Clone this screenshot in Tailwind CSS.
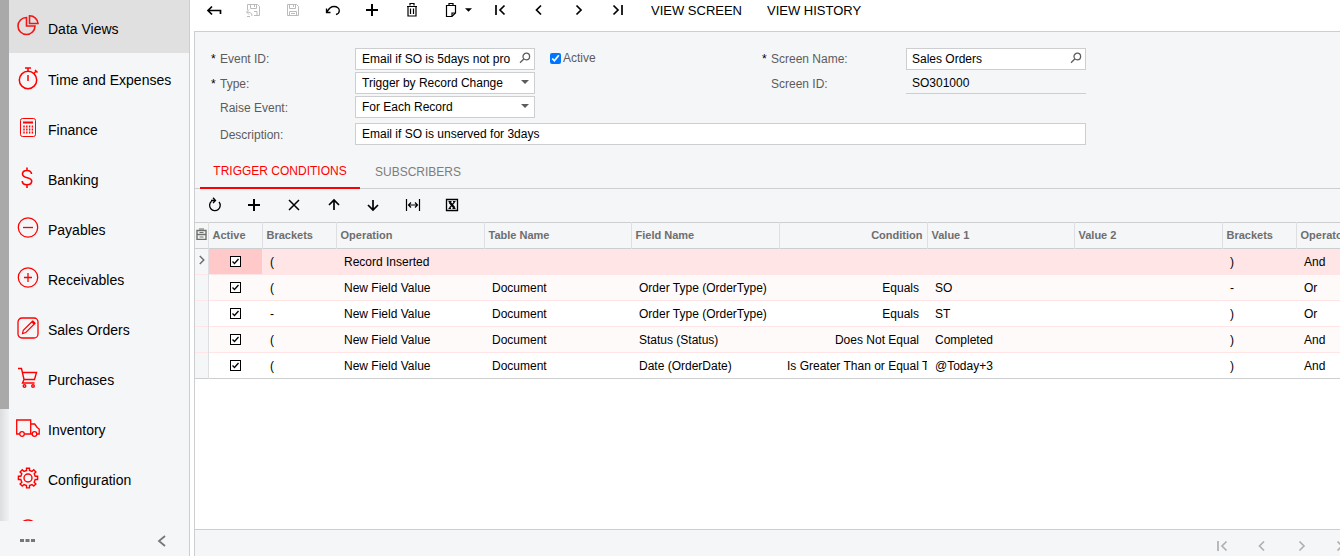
<!DOCTYPE html>
<html lang="en">
<head>
    <meta charset="UTF-8">
    <meta name="viewport" content="width=device-width, initial-scale=1.0">
    <title>Business Events</title>
    <script src="https://cdn.jsdelivr.net/npm/@tailwindcss/browser@4"></script>
</head>
<body class="flex h-screen overflow-hidden bg-white font-['Liberation_Sans',Arial,sans-serif] text-xs text-black">

    <!-- Shared icons -->
    <svg class="hidden">
        <symbol id="plus" viewBox="0 0 16 16"><path d="M8 2v12M2 8h12" fill="none" stroke="currentColor" stroke-width="2"/></symbol>
        <symbol id="prev" viewBox="0 0 16 16"><path d="M10 3.5 5.5 8l4.5 4.5" fill="none" stroke="currentColor" stroke-width="1.7"/></symbol>
        <symbol id="next" viewBox="0 0 16 16"><path d="M5.5 3.5 10 8l-4.5 4.5" fill="none" stroke="currentColor" stroke-width="1.7"/></symbol>
        <symbol id="first" viewBox="0 0 16 16"><path d="M4 3v10M12.5 3.5 8 8l4.5 4.5" fill="none" stroke="currentColor" stroke-width="1.7"/></symbol>
        <symbol id="last" viewBox="0 0 16 16"><path d="M12 3v10M3.5 3.5 8 8l-4.5 4.5" fill="none" stroke="currentColor" stroke-width="1.7"/></symbol>
        <symbol id="caret" viewBox="0 0 8 4"><path d="M0 0h8L4 4z" fill="currentColor"/></symbol>
        <symbol id="search" viewBox="0 0 12 12"><g fill="none" stroke="currentColor" stroke-width="1.3"><circle cx="7.3" cy="4.5" r="3.3"/><path d="M4.8 7 1 10.8"/></g></symbol>
    </svg>

    <!-- Sidebar -->
    <aside class="flex w-[190px] shrink-0 flex-col border-r border-[#ccced0] bg-[#f5f6f8]">
        <div class="flex min-h-0 flex-1 overflow-hidden">
            <div class="w-[9px] shrink-0 bg-gradient-to-r from-[#dcdddf] to-[#f1f2f3]">
                <div class="h-[78.5%] bg-[#a9a9a9]"></div>
            </div>
            <nav class="flex-1 text-sm">
                <a href="#" class="flex h-[53px] items-center gap-2 bg-[#e0e0e0] pl-2">
                    <svg class="size-[23px] text-[#f21616]" viewBox="0 0 23 23" fill="none" stroke="currentColor" stroke-width="1.6"><path d="M9.5 2.5a8.500 8.500 0 1 0 8.500 8.500H9.500z"/><path d="M12.500 .8v7.700H21a8.500 8 0 0 0-8.500-7.700z"/></svg>
                    <span class="pt-1">Data Views</span>
                </a>
                <a href="#" class="flex h-[50px] items-center gap-2 pl-2">
                    <svg class="size-[23px] text-[#f00]" viewBox="0 0 23 23" fill="none" stroke="currentColor" stroke-width="1.5"><circle cx="11" cy="13" r="8.7"/><path d="M8 1h6M11 1v3.5M11 8v6M16.800 6.500l2.500-2.500M18 3l2.500 2.500"/></svg>
                    <span class="pt-1">Time and Expenses</span>
                </a>
                <a href="#" class="flex h-[50px] items-center gap-2 pl-2">
                    <svg class="size-[23px] text-[#f00]" viewBox="0 0 23 23" fill="none" stroke="currentColor"><rect x="3.500" y="1.500" width="15" height="18" rx="2"/><path d="M6 5.500h10" stroke-width="2"/><path d="M7 8.500v9M9.800 8.500v9M12.600 8.500v9M15.400 8.500v9" stroke-width="1.400" stroke-dasharray="2 1"/></svg>
                    <span class="pt-1">Finance</span>
                </a>
                <a href="#" class="flex h-[50px] items-center gap-2 pl-2">
                    <svg class="size-[23px] text-[#f00]" viewBox="0 0 23 23" fill="none" stroke="currentColor" stroke-width="1.6"><path d="M10 .5v3M10 17.500V21M14.500 7C14.500 4.500 12.500 3.500 10 3.500S5.500 4.700 5.500 7c0 5 9.200 2.500 9.200 7 0 2.600-2 3.800-4.700 3.800s-4.700-1.300-4.700-3.800"/></svg>
                    <span class="pt-1">Banking</span>
                </a>
                <a href="#" class="flex h-[50px] items-center gap-2 pl-2">
                    <svg class="size-[23px] text-[#f00]" viewBox="0 0 23 23" fill="none" stroke="currentColor" stroke-width="1.3"><circle cx="11" cy="10.5" r="9.7"/><path d="M6 10.500h10"/></svg>
                    <span class="pt-1">Payables</span>
                </a>
                <a href="#" class="flex h-[50px] items-center gap-2 pl-2">
                    <svg class="size-[23px] text-[#f00]" viewBox="0 0 23 23" fill="none" stroke="currentColor" stroke-width="1.3"><circle cx="11" cy="10.5" r="9.7"/><path d="M7 10.500h8M11 6v9"/></svg>
                    <span class="pt-1">Receivables</span>
                </a>
                <a href="#" class="flex h-[50px] items-center gap-2 pl-2">
                    <svg class="size-[23px] text-[#f00]" viewBox="0 0 23 23" fill="none" stroke="currentColor" stroke-width="1.3"><rect x="1" y="1" width="20" height="20" rx="4"/><path d="M5.500 16.500l.8-3.300 9.200-9 2.300 2.300-9 9z" stroke-width="1.200"/><path d="M15.300 4.300l2.500 2.500" stroke-width="2.600"/></svg>
                    <span class="pt-1">Sales Orders</span>
                </a>
                <a href="#" class="flex h-[50px] items-center gap-2 pl-2">
                    <svg class="size-[23px] text-[#f00]" viewBox="0 0 23 23" fill="none" stroke="currentColor" stroke-width="1.4"><path d="M1 1.500h3.500l2.500 11h10.500l2-7H5.500M7 12.500l-1.500 3.500h12"/><circle cx="7.500" cy="19" r="1.300"/><circle cx="16" cy="19" r="1.300"/></svg>
                    <span class="pt-1">Purchases</span>
                </a>
                <a href="#" class="flex h-[50px] items-center gap-2 pl-[7px]">
                    <svg class="size-6 text-[#f00]" viewBox="0 0 24 24" fill="none" stroke="currentColor" stroke-width="1.3"><path d="M3.500 18H.7V4h14v14H8.500M14.700 8h4l2.500 3.500 2 1.500v5H21M14.700 18h1.500"/><circle cx="6" cy="18" r="2.300"/><circle cx="18.500" cy="18" r="2.300"/></svg>
                    <span class="pt-1">Inventory</span>
                </a>
                <a href="#" class="flex h-[50px] items-center gap-2 pl-2">
                    <svg class="size-[23px] text-[#f00]" viewBox="0 0 23 23" fill="none" stroke="currentColor" stroke-width="1.4"><circle cx="11" cy="11" r="4"/><path d="M9.500 3.500V1.300h3v2.200l2.500 1 1.700-1.700 2.200 2.200-1.700 1.700 1 2.600h2.400v3.200h-2.400l-1 2.700 1.700 1.700-2.200 2.200-1.700-1.600-2.500 1v2.400h-3v-2.400l-2.500-1-1.700 1.600-2.200-2.200 1.700-1.700-1-2.700H1.400V9.300h2.400l1-2.600L3.100 5l2.200-2.200L7 4.500z"/></svg>
                    <span class="pt-1">Configuration</span>
                </a>
                <a href="#" class="flex h-[50px] items-start pl-2 pt-4" aria-label="More items">
                    <svg class="size-[23px] text-[#f00]" viewBox="0 0 23 23" fill="none" stroke="currentColor" stroke-width="1.4"><circle cx="11" cy="10" r="9"/></svg>
                </a>
            </nav>
        </div>
        <div class="flex h-[35px] items-center justify-between px-5 pt-1 text-[#777]">
            <button type="button" aria-label="More"><svg class="h-1 w-4" viewBox="0 0 16 4" fill="currentColor"><path d="M0 0h4v3H0zM5.500 0h4v3h-4zM11 0h4v3h-4z"/></svg></button>
            <button type="button" aria-label="Collapse menu"><svg class="size-4" viewBox="0 0 16 16" fill="none" stroke="currentColor" stroke-width="1.8"><path d="M12 3 6 8l6 5"/></svg></button>
        </div>
    </aside>

    <main class="ml-1 flex min-w-0 flex-1 flex-col">
        <!-- Screen toolbar -->
        <div class="flex h-[31px] shrink-0 items-start">
            <div class="flex w-[277px]">
                <button type="button" aria-label="Back" class="flex h-5 flex-1 items-center justify-center"><svg class="size-4" viewBox="0 0 16 16" fill="none" stroke="currentColor" stroke-width="1.7"><path d="M6 5.500 2 9.500l4 4M2 9.500h12.500V13" transform="translate(0 -1)"/></svg></button>
                <button type="button" aria-label="Save and close" class="flex h-5 flex-1 items-center justify-center text-[#bbb]"><svg class="size-4" viewBox="0 0 16 16" fill="none" stroke="currentColor"><path d="M2.500 8V2.500h10l2 2v9H9M5.500 2.500v4h6v-4M9.500 3v2M9 9.500h3v4M7 14c0-3-2-4-5-4M4 7.500 1.500 10 4 12.500M2 14.500h3"/></svg></button>
                <button type="button" aria-label="Save" class="flex h-5 flex-1 items-center justify-center text-[#bbb]"><svg class="size-4" viewBox="0 0 16 16" fill="none" stroke="currentColor"><path d="M2.500 2.500h9l2 2v9h-11zM4.500 2.500v4h6v-4M8.500 3v2M4.500 13.500v-4h7v4M6 11.500h4"/></svg></button>
                <button type="button" aria-label="Undo" class="flex h-5 flex-1 items-center justify-center"><svg class="size-4" viewBox="0 0 16 16" fill="none" stroke="currentColor" stroke-width="1.3"><path d="M1.500 6.500v4h4M2 10c2-4 4-5.500 7-5.500 3.300 0 5.300 1.800 5.300 4.200 0 2-1.300 3.300-3.300 3.800"/></svg></button>
                <button type="button" aria-label="Add" class="flex h-5 flex-1 items-center justify-center"><svg class="size-4"><use href="#plus"/></svg></button>
                <button type="button" aria-label="Delete" class="flex h-5 flex-1 items-center justify-center"><svg class="size-4" viewBox="0 0 16 16" fill="none" stroke="currentColor" stroke-width="1.2"><path d="M6 3.500v-2h4v2M3 4.500h10M4 4.500v9.500h8V4.500M6.500 6.500v5.500M9.500 6.500v5.500"/></svg></button>
                <button type="button" aria-label="Clipboard" class="flex h-5 flex-1 items-center justify-center"><svg class="size-4" viewBox="0 0 16 16" fill="none" stroke="currentColor" stroke-width="1.2"><path d="M9 14.500H3.500v-11h9V11zM9 14.500V11h3.500M6 3.500v-2h4v2"/></svg></button>
            </div>
            <svg class="-ml-1.5 mr-2 mt-2 h-1 w-[7px] shrink-0"><use href="#caret"/></svg>
            <div class="flex w-[158px]">
                <button type="button" aria-label="First" class="flex h-5 flex-1 items-center justify-center"><svg class="size-4"><use href="#first"/></svg></button>
                <button type="button" aria-label="Previous" class="flex h-5 flex-1 items-center justify-center"><svg class="size-4"><use href="#prev"/></svg></button>
                <button type="button" aria-label="Next" class="flex h-5 flex-1 items-center justify-center"><svg class="size-4"><use href="#next"/></svg></button>
                <button type="button" aria-label="Last" class="flex h-5 flex-1 items-center justify-center"><svg class="size-4"><use href="#last"/></svg></button>
            </div>
            <div class="ml-[13px] flex gap-[25px] text-[13px]">
                <button type="button" class="h-[21px]">VIEW SCREEN</button>
                <button type="button" class="h-[21px]">VIEW HISTORY</button>
            </div>
        </div>

        <div class="flex min-h-0 flex-1 flex-col border-l border-t border-[#ccced0] bg-[#f5f6f8]">
            <!-- Event form -->
            <form class="grid shrink-0 grid-cols-[144px_180px_227px_144px_180px] gap-y-0.5 pl-4 pt-4 text-[#5c5c5c]">
                <label for="eventId" class="flex items-center"><span class="w-[9px] text-black">*</span>Event ID:</label>
                <div class="relative">
                    <input id="eventId" value="Email if SO is 5days not pro" class="h-[22px] w-full border border-[#ccced0] bg-white pl-1.5 pr-5 text-black">
                    <svg class="absolute right-1 top-1 size-3"><use href="#search"/></svg>
                </div>
                <label class="flex items-center gap-0.5 pb-0.5 pl-[15px]"><input type="checkbox" checked class="size-[11px] accent-[#0075ff]">Active</label>
                <label for="screenName" class="flex items-center"><span class="w-[9px] text-black">*</span>Screen Name:</label>
                <div class="relative">
                    <input id="screenName" value="Sales Orders" class="h-[22px] w-full border border-[#ccced0] bg-white pl-[5px] pr-5 text-black">
                    <svg class="absolute right-1 top-1 size-3"><use href="#search"/></svg>
                </div>

                <label for="type" class="flex items-center pt-0.5"><span class="w-[9px] text-black">*</span>Type:</label>
                <div class="relative">
                    <select id="type" class="h-[22px] w-full appearance-none border border-[#ccced0] bg-white pl-1.5 text-black"><option>Trigger by Record Change</option></select>
                    <svg class="absolute right-1.5 top-2 h-1 w-2"><use href="#caret"/></svg>
                </div>
                <label for="screenId" class="col-start-4 flex items-center pl-[9px] pt-0.5">Screen ID:</label>
                <input id="screenId" readonly value="SO301000" class="h-[22px] w-full border-b border-[#ccced0] pl-1.5 text-black">

                <label for="raise" class="flex items-center pl-[9px] pt-0.5">Raise Event:</label>
                <div class="relative">
                    <select id="raise" class="h-[22px] w-full appearance-none border border-[#ccced0] bg-white pl-1.5 text-black"><option>For Each Record</option></select>
                    <svg class="absolute right-1.5 top-2 h-1 w-2"><use href="#caret"/></svg>
                </div>

                <label for="description" class="col-start-1 mt-[3px] flex items-center pl-[9px] pt-0.5">Description:</label>
                <input id="description" value="Email if SO is unserved for 3days" class="col-span-4 mt-[3px] h-[22px] border border-[#ccced0] bg-white pl-1.5 text-black">
            </form>

            <!-- Tabs -->
            <div class="mt-2.5 flex h-[34px] shrink-0 border-b border-[#ccced0] pl-[5px]">
                <button type="button" class="-mb-px w-40 border-b-2 border-[#f00] text-[#f00]">TRIGGER CONDITIONS</button>
                <button type="button" class="px-[15px] text-[#7d7d7d]">SUBSCRIBERS</button>
            </div>

            <!-- Grid toolbar -->
            <div class="flex h-[33px] w-[277px] shrink-0 items-center pb-px">
                <button type="button" aria-label="Refresh" class="flex flex-1 justify-center"><svg class="size-4" viewBox="0 0 16 16" fill="none" stroke="currentColor" stroke-width="1.3"><path d="M4.500 4.300A5.300 5.300 0 1 0 12 5M4 3.500h4.500M6 .8l2.500 2.700L6 6"/></svg></button>
                <button type="button" aria-label="Add row" class="flex flex-1 justify-center"><svg class="size-4"><use href="#plus"/></svg></button>
                <button type="button" aria-label="Delete row" class="flex flex-1 justify-center"><svg class="size-4" viewBox="0 0 16 16" fill="none" stroke="currentColor" stroke-width="1.5"><path d="m3 3 10 10M13 3 3 13"/></svg></button>
                <button type="button" aria-label="Move up" class="flex flex-1 justify-center"><svg class="size-4" viewBox="0 0 16 16" fill="none" stroke="currentColor" stroke-width="1.7"><path d="M8 13V4M3 8l5-5 5 5"/></svg></button>
                <button type="button" aria-label="Move down" class="flex flex-1 justify-center"><svg class="size-4" viewBox="0 0 16 16" fill="none" stroke="currentColor" stroke-width="1.7"><path d="M8 3v9M3 8l5 5 5-5"/></svg></button>
                <button type="button" aria-label="Fit columns" class="flex flex-1 justify-center"><svg class="size-4" viewBox="0 0 16 16" fill="none" stroke="currentColor" stroke-width="1.2"><path d="M1.500 2v12M14.500 2v12M4 8h8M6 5.500 3.500 8 6 10.500M10 5.500 12.500 8 10 10.500"/></svg></button>
                <button type="button" aria-label="Export to Excel" class="flex flex-1 justify-center"><svg class="size-4" viewBox="0 0 16 16" fill="none" stroke="currentColor"><path d="M2.500 2.500h11v11h-11z" stroke-width="1.3"/><path d="m5.500 5 5 6" stroke-width="2.2"/><path d="m10.500 5-5 6" stroke-width="1.2"/><path d="M4.500 4.500h3M9 4.500h2.500M4.500 11.500h2.500M8.500 11.500h3"/></svg></button>
            </div>

            <!-- Conditions -->
            <div class="min-h-0 flex-1 overflow-hidden bg-white">
                <table class="w-[1221px] table-fixed border-collapse whitespace-nowrap">
                    <colgroup>
                        <col class="w-[13px]"><col class="w-[54px]"><col class="w-[74px]"><col class="w-[148px]"><col class="w-[147px]"><col class="w-[148px]"><col class="w-[148px]"><col class="w-[147px]"><col class="w-[148px]"><col class="w-[74px]"><col class="w-[120px]">
                    </colgroup>
                    <thead>
                        <tr class="h-[26px] border-y border-[#ccced0] bg-[#f5f6f8] text-left text-[11px] text-[#6e6e6e] [&>th]:border-r [&>th]:border-[#dddfe3] [&>th]:px-1 [&>th]:py-0">
                            <th aria-label="Row settings"><svg class="mb-1 ml-[-3px] h-3 w-[11px]" viewBox="0 0 11 12" fill="none" stroke="currentColor"><path d="M1 2.500h9v9H1zM1 6.500h9" stroke-width="1.4"/><path d="M3 1h5M3.500 4.500h4M3.500 9h4"/></svg></th>
                            <th>Active</th>
                            <th>Brackets</th>
                            <th>Operation</th>
                            <th>Table Name</th>
                            <th>Field Name</th>
                            <th class="text-right">Condition</th>
                            <th>Value 1</th>
                            <th>Value 2</th>
                            <th>Brackets</th>
                            <th>Operator</th>
                        </tr>
                    </thead>
                    <tbody id="conditions" class="border-b border-[#ccced0]"></tbody>
                </table>
            </div>

            <!-- Pager -->
            <div class="flex h-[27px] shrink-0 justify-end overflow-hidden border-t border-[#ccced0] pt-2 text-[#b0b0b0]">
                <div class="-mr-[22px] flex w-40 shrink-0">
                    <button type="button" aria-label="First page" class="flex flex-1 justify-center"><svg class="size-4"><use href="#first"/></svg></button>
                    <button type="button" aria-label="Previous page" class="flex flex-1 justify-center"><svg class="size-4"><use href="#prev"/></svg></button>
                    <button type="button" aria-label="Next page" class="flex flex-1 justify-center"><svg class="size-4"><use href="#next"/></svg></button>
                    <button type="button" aria-label="Last page" class="flex flex-1 justify-center"><svg class="size-4"><use href="#last"/></svg></button>
                </div>
            </div>
        </div>
    </main>

    <script>
        // open bracket, operation, table, field, condition, value 1, value 2, close bracket, operator
        const conditions = [
            ['(', 'Record Inserted', '', '', '', '', '', ')', 'And'],
            ['(', 'New Field Value', 'Document', 'Order Type (OrderType)', 'Equals', 'SO', '', '-', 'Or'],
            ['-', 'New Field Value', 'Document', 'Order Type (OrderType)', 'Equals', 'ST', '', ')', 'Or'],
            ['(', 'New Field Value', 'Document', 'Status (Status)', 'Does Not Equal', 'Completed', '', ')', 'And'],
            ['(', 'New Field Value', 'Document', 'Date (OrderDate)', 'Is Greater Than or Equal To', '@Today+3', '', ')', 'And']
        ];

        document.getElementById('conditions').innerHTML = conditions.map((row, i) => {
            const selected = i === 0;
            const rowColor = selected ? 'bg-[#ffe5e5]' : i % 2 ? 'bg-[#fffafa]' : 'bg-white';
            const cells = row.map((text, c) =>
                `<td class="overflow-hidden px-2 py-0 ${c === 4 ? 'text-right' : ''}">${text}</td>`).join('');
            return `<tr class="h-[26px] border-t border-[#ffe5e5] ${rowColor}">
                <td class="border-r border-[#dddfe3] bg-[#f5f6f8] p-0 pb-1 text-[#6e6e6e]">${selected ? '<svg class="size-3.5" viewBox="1 0 14 16"><use href="#next" width="16" height="16"/></svg>' : ''}</td>
                <td class="p-0 pb-px ${selected ? 'bg-[#ffc9c9]' : ''}">
                    <span class="relative mx-auto block size-[11px]">
                        <input type="checkbox" checked aria-label="Active" class="block size-[11px] appearance-none border border-black bg-white">
                        <svg class="pointer-events-none absolute left-0 top-0 size-[11px]" viewBox="0 0 11 11" fill="none" stroke="black" stroke-width="1.3"><path d="m2.500 5.500 2 2 4-4.500"/></svg>
                    </span>
                </td>${cells}
            </tr>`;
        }).join('');
    </script>
</body>
</html>
